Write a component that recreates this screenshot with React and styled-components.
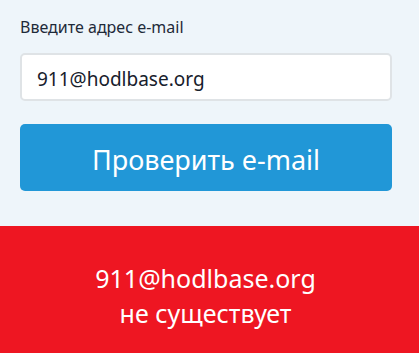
import React, { useState } from "react";
import styled, { createGlobalStyle } from "styled-components";

const GlobalStyle = createGlobalStyle`
    html, body {
        margin: 0;
        padding: 0;
        background: #eef5fa;
    }
    * {
        box-sizing: border-box;
    }
`;

const App = () => {
    const [email, setEmail] = useState("911@hodlbase.org");
    return (
        <>
            <GlobalStyle />
            <Page>
                <Form onSubmit={(e) => e.preventDefault()}>
                    <Label htmlFor="email">Введите адрес e-mail</Label>
                    <Input
                        id="email"
                        value={email}
                        onChange={(e) => setEmail(e.target.value)}
                    />
                    <Submit>Проверить e-mail</Submit>
                </Form>
                <Result>
                    <Message>
                        911@hodlbase.org
                        <br />
                        не существует
                    </Message>
                </Result>
            </Page>
        </>
    );
};

export default App;

const Page = styled.div`
    width: 419px;
    min-height: 353px;
    display: flex;
    flex-direction: column;
    font-family: "Noto Sans", "Open Sans", sans-serif;
    color: #1b2838;
`;

const Form = styled.form`
    display: flex;
    flex-direction: column;
    padding: 17px 27px 35px 20px;
    margin: 0;
`;

const Label = styled.label`
    font-size: 16px;
    line-height: 20px;
    color: #1e2a39;
    margin-bottom: 16px;
`;

const Input = styled.input`
    width: 100%;
    height: 48px;
    padding: 4px 15px 0;
    border: 2px solid #dfe3e6;
    border-radius: 5px;
    background: #ffffff;
    font-family: inherit;
    font-size: 19px;
    color: #17202c;
    outline: none;
    margin-bottom: 23px;
`;

const Submit = styled.button.attrs((props) => ({
    type: props.type || "submit",
}))`
    width: 100%;
    height: 67px;
    border: none;
    border-radius: 5px;
    background: #2197d7;
    color: #ffffff;
    font-family: inherit;
    font-size: 27px;
    cursor: pointer;
    padding: 3px 0 0;
`;

const Result = styled.div`
    flex: 1;
    background: #ee1622;
    color: #ffffff;
    display: flex;
    flex-direction: column;
    align-items: center;
    padding: 35px 8px 0 0;
`;

const Message = styled.p`
    margin: 0;
    text-align: center;
    font-size: 25px;
    line-height: 34.5px;
`;
